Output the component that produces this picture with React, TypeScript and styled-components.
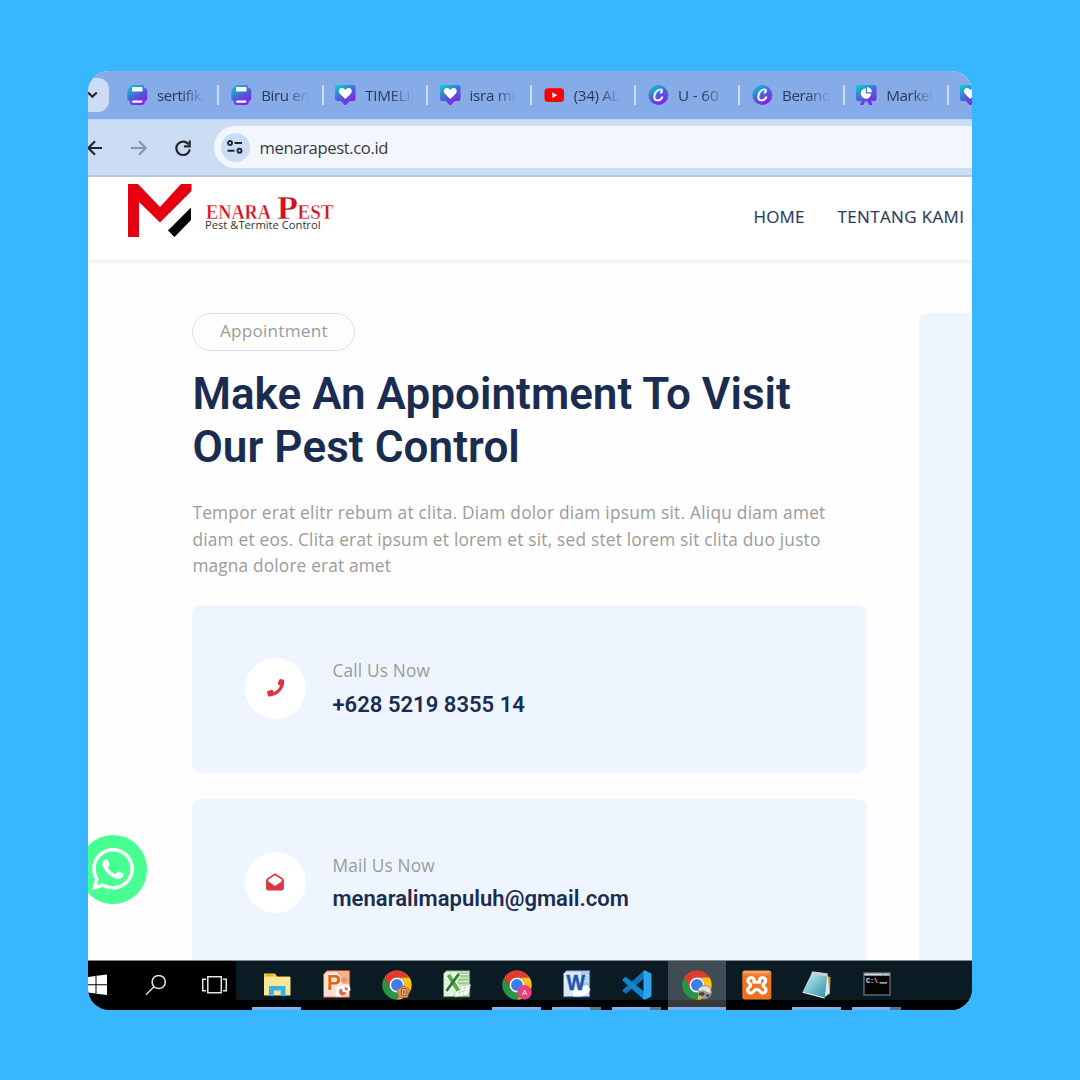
import React from 'react';
import styled, { createGlobalStyle, css } from 'styled-components';
import { FaPhone, FaWhatsapp } from 'react-icons/fa';

const GlobalStyle = createGlobalStyle`
  * { box-sizing: border-box; }
  body { margin: 0; background: #38b6ff; }
`;

const openSans = "'Open Sans', 'Noto Sans', sans-serif";
const roboto = "Roboto, 'Liberation Sans', sans-serif";

const Backdrop = styled.main`
  width: 1080px;
  height: 1080px;
  padding: 71px 108px 0 88px;
  background: #38b6ff;
  overflow: hidden;
`;

const Frame = styled.div`
  position: relative;
  display: flex;
  flex-direction: column;
  height: 938.5px;
  border-radius: 21px;
  overflow: hidden;
  background: #fefefe;
`;

/* ---------- browser chrome ---------- */

const TabStrip = styled.div`
  display: flex;
  flex: none;
  align-items: center;
  height: 48px;
  background: #85abe8;
  overflow: hidden;
`;

const TabSearch = styled.div`
  display: flex;
  flex: none;
  align-items: center;
  justify-content: flex-start;
  width: 21px;
  height: 34px;
  margin: 0 6.3px 1px 0;
  border-radius: 0 11px 11px 0;
  background: #cddcf5;
`;

const Tab = styled.div`
  display: flex;
  flex: none;
  align-items: center;
  width: 104.2px;
  height: 20px;
  padding-left: 11.7px;
  border-right: 2px solid #cbdaf5;
`;

const Favicon = styled.svg`
  flex: none;
  width: 21px;
  height: 20px;
  overflow: visible;
`;

const TabTitle = styled.span<{ $spacing?: number }>`
  width: 48px;
  margin-left: 9px;
  overflow: hidden;
  white-space: nowrap;
  font: 400 15.2px/22px ${openSans};
  letter-spacing: ${(p) => p.$spacing ?? -0.5}px;
  color: #2d3a54;
  mask-image: linear-gradient(90deg, #000 52%, transparent 100%);
`;

const Toolbar = styled.div`
  display: flex;
  flex: none;
  align-items: center;
  height: 58px;
  background: #cbdcf5;
  border-top: 1px solid #bfd2f2;
  border-bottom: 2px solid #b7c6e2;
`;

const NavIcon = styled.svg<{ $gap: number; $faded?: boolean }>`
  flex: none;
  width: 16px;
  height: 16px;
  margin-right: ${(p) => p.$gap}px;
  fill: none;
  stroke: ${(p) => (p.$faded ? '#8995a9' : '#24282e')};
  stroke-width: 2.2;
`;

const AddressBar = styled.div`
  display: flex;
  flex: 1;
  align-items: center;
  height: 42px;
  margin-top: -1px;
  padding-left: 6.5px;
  border-radius: 21px 0 0 21px;
  background: #f3f7fd;
`;

const SiteInfo = styled.div`
  display: flex;
  align-items: center;
  justify-content: center;
  width: 29px;
  height: 29px;
  margin-right: 10px;
  border-radius: 50%;
  background: #cbdcf5;
`;

const Url = styled.span`
  padding-top: 1.5px;
  font: 400 16.6px/24px ${openSans};
  letter-spacing: -0.36px;
  color: #373a40;
`;

/* ---------- web page ---------- */

const Page = styled.div`
  display: flex;
  flex: 1;
  flex-direction: column;
  min-height: 0;
  overflow: hidden;
`;

const SiteHeader = styled.header`
  display: flex;
  flex: none;
  justify-content: space-between;
  height: 83px;
  padding: 4px 7.700px 0 38px;
  background: #fff;
  box-shadow: 0 2px 5px rgba(0, 0, 0, 0.08);
`;

const Logo = styled.svg`
  width: 212px;
  height: 62px;
`;

const Menu = styled.nav`
  display: flex;
  align-items: center;
  gap: 33px;
  height: 71px;
`;

const MenuLink = styled.a<{ $spacing: number }>`
  font: 500 17px/24px ${openSans};
  letter-spacing: ${(p) => p.$spacing}px;
  color: #2a3a5e;
  -webkit-text-stroke: 0.15px #2a3a5e;
`;

const Content = styled.section`
  display: flex;
  flex: 1;
  gap: 52.5px;
  min-height: 0;
  padding: 52.500px 0 0 104.4px;
`;

const Intro = styled.div`
  display: flex;
  flex: none;
  flex-direction: column;
  align-items: flex-start;
  width: 674.5px;
`;

const FormPanel = styled.aside`
  flex: 1;
  border-radius: 9px 0 0 0;
  background: #eef5ff;
`;

const Badge = styled.span`
  flex: none;
  width: 163px;
  height: 38px;
  border: 1.9px solid #d0e1fc;
  border-radius: 19px;
  font: 400 17.2px/34px ${openSans};
  letter-spacing: 0.2px;
  text-align: center;
  color: #9b9b9b;
`;

const Title = styled.h1`
  margin: 17.500px 0 0;
  font: 600 44px/52.6px ${roboto};
  color: #1b2c51;
  white-space: nowrap;
`;

const TitleLine = styled.span<{ $spacing: number }>`
  display: block;
  letter-spacing: ${(p) => p.$spacing}px;
`;

const Lead = styled.p`
  margin: 27px 0 0;
  font: 400 17.3px/26.4px ${openSans};
  color: #9b9b9b;
  white-space: nowrap;
`;

const LeadLine = styled.span<{ $spacing: number }>`
  display: block;
  letter-spacing: ${(p) => p.$spacing}px;
`;

const Cards = styled.div`
  width: 100%;
  margin-top: 25.200px;
`;

const ContactCard = styled.div`
  display: flex;
  flex: none;
  align-items: center;
  width: 100%;
  height: 168px;
  margin-bottom: 26.300px;
  padding: 0 0 1px 52.6px;
  border-radius: 9px;
  background: #eef5ff;
`;

const ContactIcon = styled.div`
  display: flex;
  align-items: center;
  justify-content: center;
  width: 61px;
  height: 61px;
  margin-right: 26.5px;
  border-radius: 50%;
  background: #fff;
  color: #dc3545;
  font-size: 17.5px;
`;

const ContactText = styled.div`
  display: flex;
  flex-direction: column;
  gap: 6.500px;
`;

const ContactLabel = styled.span`
  font: 400 17.3px/26px ${openSans};
  letter-spacing: 0.17px;
  color: #9b9b9b;
`;

const ContactValue = styled.strong<{ $spacing: number }>`
  font: 600 22px/27px ${roboto};
  letter-spacing: ${(p) => p.$spacing}px;
  color: #1b2c51;
`;

const WhatsAppButton = styled.a`
  position: absolute;
  left: -9.5px;
  top: 764px;
  display: flex;
  align-items: center;
  justify-content: center;
  width: 68.5px;
  height: 68.5px;
  border-radius: 50%;
  background: #48ff91;
  color: #fff;
  font-size: 48px;
`;

/* ---------- taskbar ---------- */

const Taskbar = styled.div`
  display: flex;
  flex: none;
  height: 49.2px;
  border-top: 1px solid #85898c;
  background: #000;
`;

const StartArea = styled.div`
  flex: none;
  width: 148px;
`;

const StartIcons = styled.svg`
  display: block;
  width: 148px;
  height: 48px;
`;

const AppList = styled.div`
  display: flex;
  flex: 1;
  padding-left: 10.500px;
  background: linear-gradient(#0a1b24 0 38.5px, #000 39px);
`;

const AppButton = styled.div<{ $active?: boolean }>`
  display: flex;
  flex: none;
  flex-direction: column;
  align-items: center;
  width: 60px;
  height: 48.2px;
  padding-top: 8.5px;
  ${(p) =>
    p.$active &&
    css`
      background: linear-gradient(90deg, transparent 1px, rgba(255, 255, 255, 0.22) 1px 59px, transparent 59px);
    `}
`;

const AppIcon = styled.svg`
  width: 30px;
  height: 30px;
  overflow: visible;
`;

const Running = styled.div<{ $kind: 'single' | 'multi' | 'active' }>`
  width: ${(p) => (p.$kind === 'active' ? 58 : 49)}px;
  height: 2.5px;
  margin-top: auto;
  background: ${(p) =>
    p.$kind === 'multi' ? 'linear-gradient(90deg, #7ab2ec 0 38px, #53779d 38px)' : '#7ab2ec'};
`;

/* ---------- drawings ---------- */

type FaviconKind = 'print' | 'social' | 'youtube' | 'canva' | 'board';

const TabIcon = ({ kind }: { kind: FaviconKind }) => (
  <Favicon viewBox="0 0 21 20">
    {kind === 'print' && (
      <>
        <path
          d="M6 0h8.500a2.500 2.500 0 0 1 2.500 2.700 3.600 3.600 0 0 1 3.200 3.600v7a3.200 3.200 0 0 1-2.400 3.100A3.500 3.500 0 0 1 14.500 20H6a3.500 3.500 0 0 1-3.300-3.600A3.200 3.200 0 0 1 .3 13.300v-7a3.600 3.600 0 0 1 3.200-3.600A2.500 2.500 0 0 1 6 0z"
          fill="url(#canva)"
        />
        <rect x="5.1" y="1.900" width="10.400" height="4.600" rx="0.6" fill="#fff" />
        <rect x="5.3" y="15.500" width="10" height="2.200" rx="0.6" fill="#fff" />
      </>
    )}
    {kind === 'social' && (
      <>
        <path d="M2.500 0h15.500a2.500 2.500 0 0 1 2.500 2.500v11a2.500 2.500 0 0 1-2.500 2.500h-3.300l-3.200 3.500q-1.200 1-2.400 0L5.800 16H2.500A2.500 2.500 0 0 1 0 13.500v-11A2.500 2.500 0 0 1 2.500 0z" fill="url(#canva)" />
        <path d="M10.300 14 5 8.700C2.800 6.400 4 3 6.900 3c1.700 0 2.700 1 3.400 2.100C11 4 12.100 3 13.700 3c2.900 0 4.100 3.400 2 5.700z" fill="#fff" />
      </>
    )}
    {kind === 'youtube' && (
      <>
        <rect x="0.5" y="3.300" width="19.500" height="13.800" rx="3.600" fill="#f00" />
        <path d="M8.300 7.300v5.800l5-2.900z" fill="#fff" />
      </>
    )}
    {kind === 'canva' && (
      <>
        <circle cx="10.300" cy="10" r="10" fill="url(#canva)" />
        <path d="M12.800 7.700c1.600-.8 1.800-3.300-.4-3.300-3 0-6.100 3.700-6.100 7.300 0 2.300 1.300 3.700 3.300 3.700 2 0 3.700-1.200 4.700-3.100" fill="none" stroke="#fff" strokeWidth="1.900" strokeLinecap="round" />
      </>
    )}
    {kind === 'board' && (
      <>
        <path d="M2.500 0h15.500a2.500 2.500 0 0 1 2.500 2.500v11a2.500 2.500 0 0 1-2.500 2.500h-3l1.500 4h-3.300l-1.500-3.500h-2.800L7.400 20H4l1.600-4H2.500A2.500 2.500 0 0 1 0 13.500v-11A2.500 2.500 0 0 1 2.500 0z" fill="url(#canva)" />
        <path d="M9.800 3.300v5.200h5.300a5.200 5.200 0 1 1-5.300-5.200z" fill="#fff" />
        <path d="M11 2.300a4.900 4.900 0 0 1 4.900 5H11z" fill="#fff" />
      </>
    )}
  </Favicon>
);

const Gradients = () => (
  <svg width="0" height="0" style={{ position: 'absolute' }}>
    <defs>
      <linearGradient id="canva" gradientUnits="userSpaceOnUse" x1="3" y1="1" x2="14" y2="19">
        <stop offset="0" stopColor="#08c8cf" />
        <stop offset="0.500" stopColor="#4867d8" />
        <stop offset="1" stopColor="#8420e6" />
      </linearGradient>
      <linearGradient id="sheet" x1="0" y1="0" x2="1" y2="1">
        <stop offset="0" stopColor="#e2f4f5" />
        <stop offset="0.600" stopColor="#69b9cb" />
        <stop offset="1" stopColor="#2e8ca8" />
      </linearGradient>
      <linearGradient id="orange" x1="0" y1="0" x2="0" y2="1">
        <stop offset="0" stopColor="#f2a06a" />
        <stop offset="0.200" stopColor="#f2741d" />
        <stop offset="1" stopColor="#ec701e" />
      </linearGradient>
    </defs>
  </svg>
);

const OpenEnvelope = () => (
  <svg width="18" height="18" viewBox="0 0 18 18">
    <path
      d="M9 .3 16.800 5.200Q17.900 6 17.900 7.400V15.600a1.800 1.800 0 0 1-1.800 1.800H1.900A1.800 1.800 0 0 1 .1 15.600V7.400Q.1 6 1.200 5.200zM9 2.200 2.300 6.500V8.500L9 12.900l6.700-4.400V6.500z"
      fill="currentColor"
      fillRule="evenodd"
    />
  </svg>
);

const wedge = 'M24 12H44.780A24 24 0 0 0 3.220 12L13.610 30A12 12 0 0 1 24 12z';

const Chrome = ({ badge }: { badge: 'shield' | 'letter' | 'helmet' }) => (
  <>
    <g transform="translate(0.200 0.200) scale(0.615)">
      <path d={wedge} fill="#e33b2e" />
      <path d={wedge} fill="#fbc116" transform="rotate(120 24 24)" />
      <path d={wedge} fill="#299647" transform="rotate(240 24 24)" />
      <circle cx="24" cy="24" r="12.200" fill="#fff" />
      <circle cx="24" cy="24" r="9.600" fill="#3b7ded" />
    </g>
    {badge === 'letter' && (
      <>
        <circle cx="22.500" cy="22.300" r="7.200" fill="#eb3c7d" />
        <text x="22.500" y="25.300" textAnchor="middle" fontFamily="Roboto, sans-serif" fontSize="8" fill="#fff">A</text>
      </>
    )}
    {badge === 'shield' && (
      <>
        <path d="m22 15.500 5.500 4-2 8h-8.500l-2-7.500z" fill="#e58a52" stroke="#bd5c34" strokeWidth="0.700" />
        <rect x="19.500" y="18.500" width="4.600" height="7" rx="1.600" fill="#e8d296" stroke="#7b4a2b" strokeWidth="0.900" />
        <path d="M21.800 20v4" stroke="#70602f" strokeWidth="1.500" />
      </>
    )}
    {badge === 'helmet' && (
      <>
        <circle cx="22.700" cy="22" r="7" fill="#9c9b97" />
        <path d="M16.500 19c3-3 8-4 11-1l1.500 5-4-1-3-2-5 1z" fill="#e3e3df" />
        <path d="m17 23 4-1 2 2-2 2-4-1zm7 1 4 1-3 3z" fill="#45423c" />
        <path d="M16 26h3v3.500h-3z" fill="#dfba2d" />
      </>
    )}
  </>
);

type AppKind = 'files' | 'powerpoint' | 'chrome-shield' | 'excel' | 'chrome-letter' | 'word' | 'code' | 'chrome-helmet' | 'xampp' | 'notepad' | 'terminal';

const appDrawings: Record<AppKind, React.ReactNode> = {
  files: (
    <>
      <path d="M2 3.500h11l2 3h13v18.500H2z" fill="#f0cf62" />
      <path d="M2 7h26.500v18.500H2z" fill="#fbe596" />
      <path d="M3.500 4.300h8v1.800h-8z" fill="#e3b312" />
      <path d="M7 26V16h16.500v10h-4.800v-5.500h-6.900V26z" fill="#39b2ea" />
    </>
  ),
  powerpoint: (
    <>
      <path d="M5 .8h22.700v26.400H1.500V4.300z" fill="#fae0d3" stroke="#c84a23" strokeWidth="1" />
      <path d="M15 1.500h12v14l-8-3z" fill="#f5b092" />
      <path d="M18 9a6 6 0 0 1 8 0l-4 5z" fill="#ee8f69" />
      <path d="m14.500 17 12.500-3 1.500 6-9 6.500h-6z" fill="#fff" />
      <path d="M19.500 18.200a3.800 3.800 0 1 0 5 4.300l-3.700-.8zM22.500 17l.6 3.200 3-.2a3.500 3.500 0 0 0-3.600-3z" fill="#e06a45" />
      <text x="5" y="20" textLength="14" lengthAdjust="spacingAndGlyphs" fontFamily="'Liberation Sans', sans-serif" fontWeight="700" fontSize="21.500" fill="#dd641b" stroke="#fff" strokeWidth="1.300" paintOrder="stroke">P</text>
    </>
  ),
  'chrome-shield': <Chrome badge="shield" />,
  excel: (
    <>
      <path d="M4.500.8h23.200v26H1.500V3.500z" fill="#e3f0df" stroke="#4a8f45" strokeWidth="0.900" />
      <path d="M16 2.500h10.500v12H16z" fill="#9ccd92" />
      <path d="M17 4.500h9M17 8h9M17 11.500h9" stroke="#e4f2e0" strokeWidth="1" />
      <path d="m13 17 15.500-2.500-2 10.500-13.500 2z" fill="#fff" stroke="#8dbb87" strokeWidth="0.600" />
      <path d="m15 20 12-3M15 23l11-3M19 17l-2 9M23 16l-2 9" stroke="#a7c9a1" strokeWidth="0.600" />
      <g fill="none" stroke="#fff" strokeWidth="5.200">
        <path d="m6.500 5.500 9.500 15M16.300 4.500 5 20.500" />
      </g>
      <path d="m6.500 5 9.800 15.800" fill="none" stroke="#5fa84a" strokeWidth="4" />
      <path d="M16.800 4 4.500 20.800" fill="none" stroke="#2f7c35" strokeWidth="2.900" />
    </>
  ),
  'chrome-letter': <Chrome badge="letter" />,
  word: (
    <>
      <path d="M4.500.8h23.200v26H1.500V3.500z" fill="#dce8f7" stroke="#4c78b7" strokeWidth="0.900" />
      <path d="M19 2h8v14h-8z" fill="#a9c6ec" />
      <path d="M20 5h7M20 8h7M20 11h7" stroke="#e9f1fb" />
      <path d="m12 19 13-4 3.500 5-8.500 6.500h-9z" fill="#fff" />
      <text x="4.500" y="20" textLength="18.500" lengthAdjust="spacingAndGlyphs" fontFamily="'Liberation Sans', sans-serif" fontWeight="700" fontSize="21.500" fill="#1d56ae" stroke="#1d56ae" strokeWidth="0.500">W</text>
    </>
  ),
  code: (
    <>
      <path d="M22 8.500 4.500 23.200Q3.800 23.700 3.100 23.200L.8 21.300Q0 20.500.8 19.700L22 .5z" fill="#1173b8" />
      <path d="M22 21.500 4.500 7.300Q3.800 6.800 3.100 7.300L.8 9.200Q0 10 .8 10.800L22 29.800z" fill="#0f86d0" />
      <path d="M21.500.8Q22.300.2 23 .5L28.500 3Q29.500 3.500 29.500 4.500V25.500Q29.500 26.500 28.500 27L23 29.600Q22.300 29.800 21.500 29.300z" fill="#2ba5ef" />
    </>
  ),
  'chrome-helmet': <Chrome badge="helmet" />,
  xampp: (
    <>
      <rect x="0.300" y="0.500" width="29" height="29" rx="2.500" fill="url(#orange)" />
      <path d="M2.500 2.300h24.500" stroke="#f8bb90" strokeWidth="0.800" />
      <path
        d="M12 12.300C12.600 9 11.300 7.600 9.200 7.600 6.900 7.600 5.700 9.200 6 11.200 6.300 13.200 8.600 13.300 8.600 15.200S5.900 17.500 5.700 19.700C5.500 21.800 6.900 23.200 9 23.200 11.700 23.200 11.500 19.300 14.800 19.300S17.900 23.200 20.600 23.200C22.700 23.200 24.100 21.800 23.900 19.700 23.700 17.500 21 17.100 21 15.200S23.300 13.200 23.600 11.200C23.900 9.200 22.700 7.600 20.400 7.600 18.300 7.600 17 9 17.600 12.300"
        fill="none"
        stroke="#fff"
        strokeWidth="3.200"
      />
      <path d="M10.500 12.200h8.600" stroke="#fff" strokeWidth="3" />
    </>
  ),
  notepad: (
    <>
      <path d="m24 6 4.500 1-.5 17-4 2z" fill="#c69d43" />
      <path d="m10.500 1.500 15 2-3 24L.8 21.500z" fill="url(#sheet)" />
      <path d="m25.500 3.500 2 19-5 5z" fill="#d9eeee" />
      <path d="m10.500 1.500 15 2-.4 3L9 4z" fill="#c8d3d2" />
      <path d="m.8 21.500 22 6-.3 1L.6 22.700z" fill="#fff" />
    </>
  ),
  terminal: (
    <>
      <rect x="1.500" y="2.500" width="27" height="23" fill="#8b9092" />
      <rect x="2.500" y="6" width="25" height="18.500" fill="#050505" />
      <path d="M3 4.300h17" stroke="#d9dcde" strokeWidth="1.200" />
      <path d="M21.500 4.300h5.500" stroke="#e8eaea" strokeWidth="1.200" strokeDasharray="1.300 .5" />
      <text x="4" y="13" fontFamily="'Liberation Mono', monospace" fontWeight="700" fontSize="8" textLength="12" lengthAdjust="spacingAndGlyphs" fill="#e8e8e8">C:\</text>
      <path d="M17.500 12.800H25" stroke="#ddd" strokeWidth="1.300" />
    </>
  ),
};

/* ---------- data ---------- */

const tabs: { icon: FaviconKind; title: string; spacing?: number }[] = [
  { icon: 'print', title: 'sertifikat' },
  { icon: 'print', title: 'Biru emas', spacing: -0.4 },
  { icon: 'social', title: 'TIMELINE', spacing: -0.35 },
  { icon: 'social', title: 'isra miraj', spacing: -0.3 },
  { icon: 'youtube', title: '(34) ALL', spacing: -0.35 },
  { icon: 'canva', title: 'U - 60', spacing: -0.1 },
  { icon: 'canva', title: 'Beranda' },
  { icon: 'board', title: 'Marketing', spacing: -0.4 },
  { icon: 'social', title: '' },
];

const apps: { kind: AppKind; running?: 'single' | 'multi' | 'active' }[] = [
  { kind: 'files', running: 'single' },
  { kind: 'powerpoint' },
  { kind: 'chrome-shield' },
  { kind: 'excel' },
  { kind: 'chrome-letter', running: 'single' },
  { kind: 'word', running: 'multi' },
  { kind: 'code', running: 'multi' },
  { kind: 'chrome-helmet', running: 'active' },
  { kind: 'xampp' },
  { kind: 'notepad', running: 'single' },
  { kind: 'terminal', running: 'multi' },
];

export default function App() {
  return (
    <Backdrop>
      <GlobalStyle />
      <Gradients />
      <Frame>
        <TabStrip>
          <TabSearch>
            <svg width="12" height="10" viewBox="0 0 12 10" fill="none" stroke="#24282e" strokeWidth="2.200">
              <path d="m0 2.500 4.300 4.300L8.800 2.500" />
            </svg>
          </TabSearch>
          {tabs.map((tab, i) => (
            <Tab key={i}>
              <TabIcon kind={tab.icon} />
              <TabTitle $spacing={tab.spacing}>{tab.title}</TabTitle>
            </Tab>
          ))}
        </TabStrip>

        <Toolbar>
          <NavIcon $gap={27} viewBox="0 0 16 16">
            <path d="M14 8H1M7 1.300.3 8 7 14.700" />
          </NavIcon>
          <NavIcon $gap={28} $faded viewBox="0 0 16 16">
            <path d="M0 8h14M8 1.300 14.600 8 8 14.700" />
          </NavIcon>
          <NavIcon $gap={23} viewBox="0 0 16 16">
            <path d="M13.600 4.500A6.700 6.700 0 1 0 14.700 9.300" />
            <path d="M14.700.5V6.300H8.900" />
          </NavIcon>
          <AddressBar>
            <SiteInfo>
              <svg width="16" height="14" viewBox="0 0 16 14" fill="none" stroke="#24282e" strokeWidth="1.900">
                <circle cx="3" cy="3" r="2" />
                <path d="M7.500 3H15M0.500 10.800H7.500" />
                <circle cx="12.500" cy="10.800" r="2" />
              </svg>
            </SiteInfo>
            <Url>menarapest.co.id</Url>
          </AddressBar>
        </Toolbar>

        <Page>
          <SiteHeader>
            <Logo viewBox="126 181 212 62">
              <path d="M128 184h10l22 23 21-23h10.500v7L160 222.500 139 202v35h-11z" fill="#e6000f" />
              <path d="M191 207.500V220l-16.500 17-6.500-6.500z" fill="#000" />
              <g fontFamily="'Liberation Serif', serif" fontWeight="700" fill="#d0121f" stroke="#fff" strokeWidth="0.350">
                <text x="206" y="219.300" fontSize="21.500" textLength="65" lengthAdjust="spacingAndGlyphs">ENARA</text>
                <text x="277" y="219.300" fontSize="33" textLength="21" lengthAdjust="spacingAndGlyphs">P</text>
                <text x="297.500" y="219.300" fontSize="20.500" textLength="36" lengthAdjust="spacingAndGlyphs">EST</text>
              </g>
              <text x="205" y="229.300" fontFamily={openSans} fontSize="11.200" textLength="115.500" lengthAdjust="spacingAndGlyphs" fill="#333">
                Pest &amp;Termite Control
              </text>
            </Logo>
            <Menu>
              <MenuLink $spacing={0.1}>HOME</MenuLink>
              <MenuLink $spacing={0.36}>TENTANG KAMI</MenuLink>
            </Menu>
          </SiteHeader>

          <Content>
            <Intro>
              <Badge>Appointment</Badge>
              <Title>
                <TitleLine $spacing={0.04}>Make An Appointment To Visit</TitleLine>
                <TitleLine $spacing={0.08}>Our Pest Control</TitleLine>
              </Title>
              <Lead>
                <LeadLine $spacing={0.245}>Tempor erat elitr rebum at clita. Diam dolor diam ipsum sit. Aliqu diam amet</LeadLine>
                <LeadLine $spacing={0.22}>diam et eos. Clita erat ipsum et lorem et sit, sed stet lorem sit clita duo justo</LeadLine>
                <LeadLine $spacing={0.16}>magna dolore erat amet</LeadLine>
              </Lead>
              <Cards>
                <ContactCard>
                  <ContactIcon><FaPhone /></ContactIcon>
                  <ContactText>
                    <ContactLabel>Call Us Now</ContactLabel>
                    <ContactValue $spacing={0.03}>+628 5219 8355 14</ContactValue>
                  </ContactText>
                </ContactCard>
                <ContactCard>
                  <ContactIcon><OpenEnvelope /></ContactIcon>
                  <ContactText>
                    <ContactLabel>Mail Us Now</ContactLabel>
                    <ContactValue $spacing={0.03}>menaralimapuluh@gmail.com</ContactValue>
                  </ContactText>
                </ContactCard>
              </Cards>
            </Intro>
            <FormPanel />
          </Content>
        </Page>

        <WhatsAppButton><FaWhatsapp /></WhatsAppButton>

        <Taskbar>
          <StartArea>
            <StartIcons viewBox="88 961.500 148 48">
              <path d="M88 977.500l7.500-1v8.300H88zM96.500 976.300l10.500-1.300v9.800H96.500zM88 985.800h7.500v8.300l-7.500-1zM96.500 985.800H107v9.700l-10.500-1.300z" fill="#fff" />
              <g fill="none" stroke="#e6e6e6" strokeWidth="1.500">
                <circle cx="158.700" cy="982.500" r="6.600" />
                <path d="m154 987.300-8 8" />
                <path d="M207.800 977.300h13.500v16h-13.500zM206 979.700h-3.300v11.500h3.300M223 979.700h3.300v11.500H223" />
              </g>
            </StartIcons>
          </StartArea>
          <AppList>
            {apps.map((app) => (
              <AppButton key={app.kind} $active={app.running === 'active'}>
                <AppIcon viewBox="0 0 30 30">{appDrawings[app.kind]}</AppIcon>
                {app.running && <Running $kind={app.running} />}
              </AppButton>
            ))}
          </AppList>
        </Taskbar>
      </Frame>
    </Backdrop>
  );
}
